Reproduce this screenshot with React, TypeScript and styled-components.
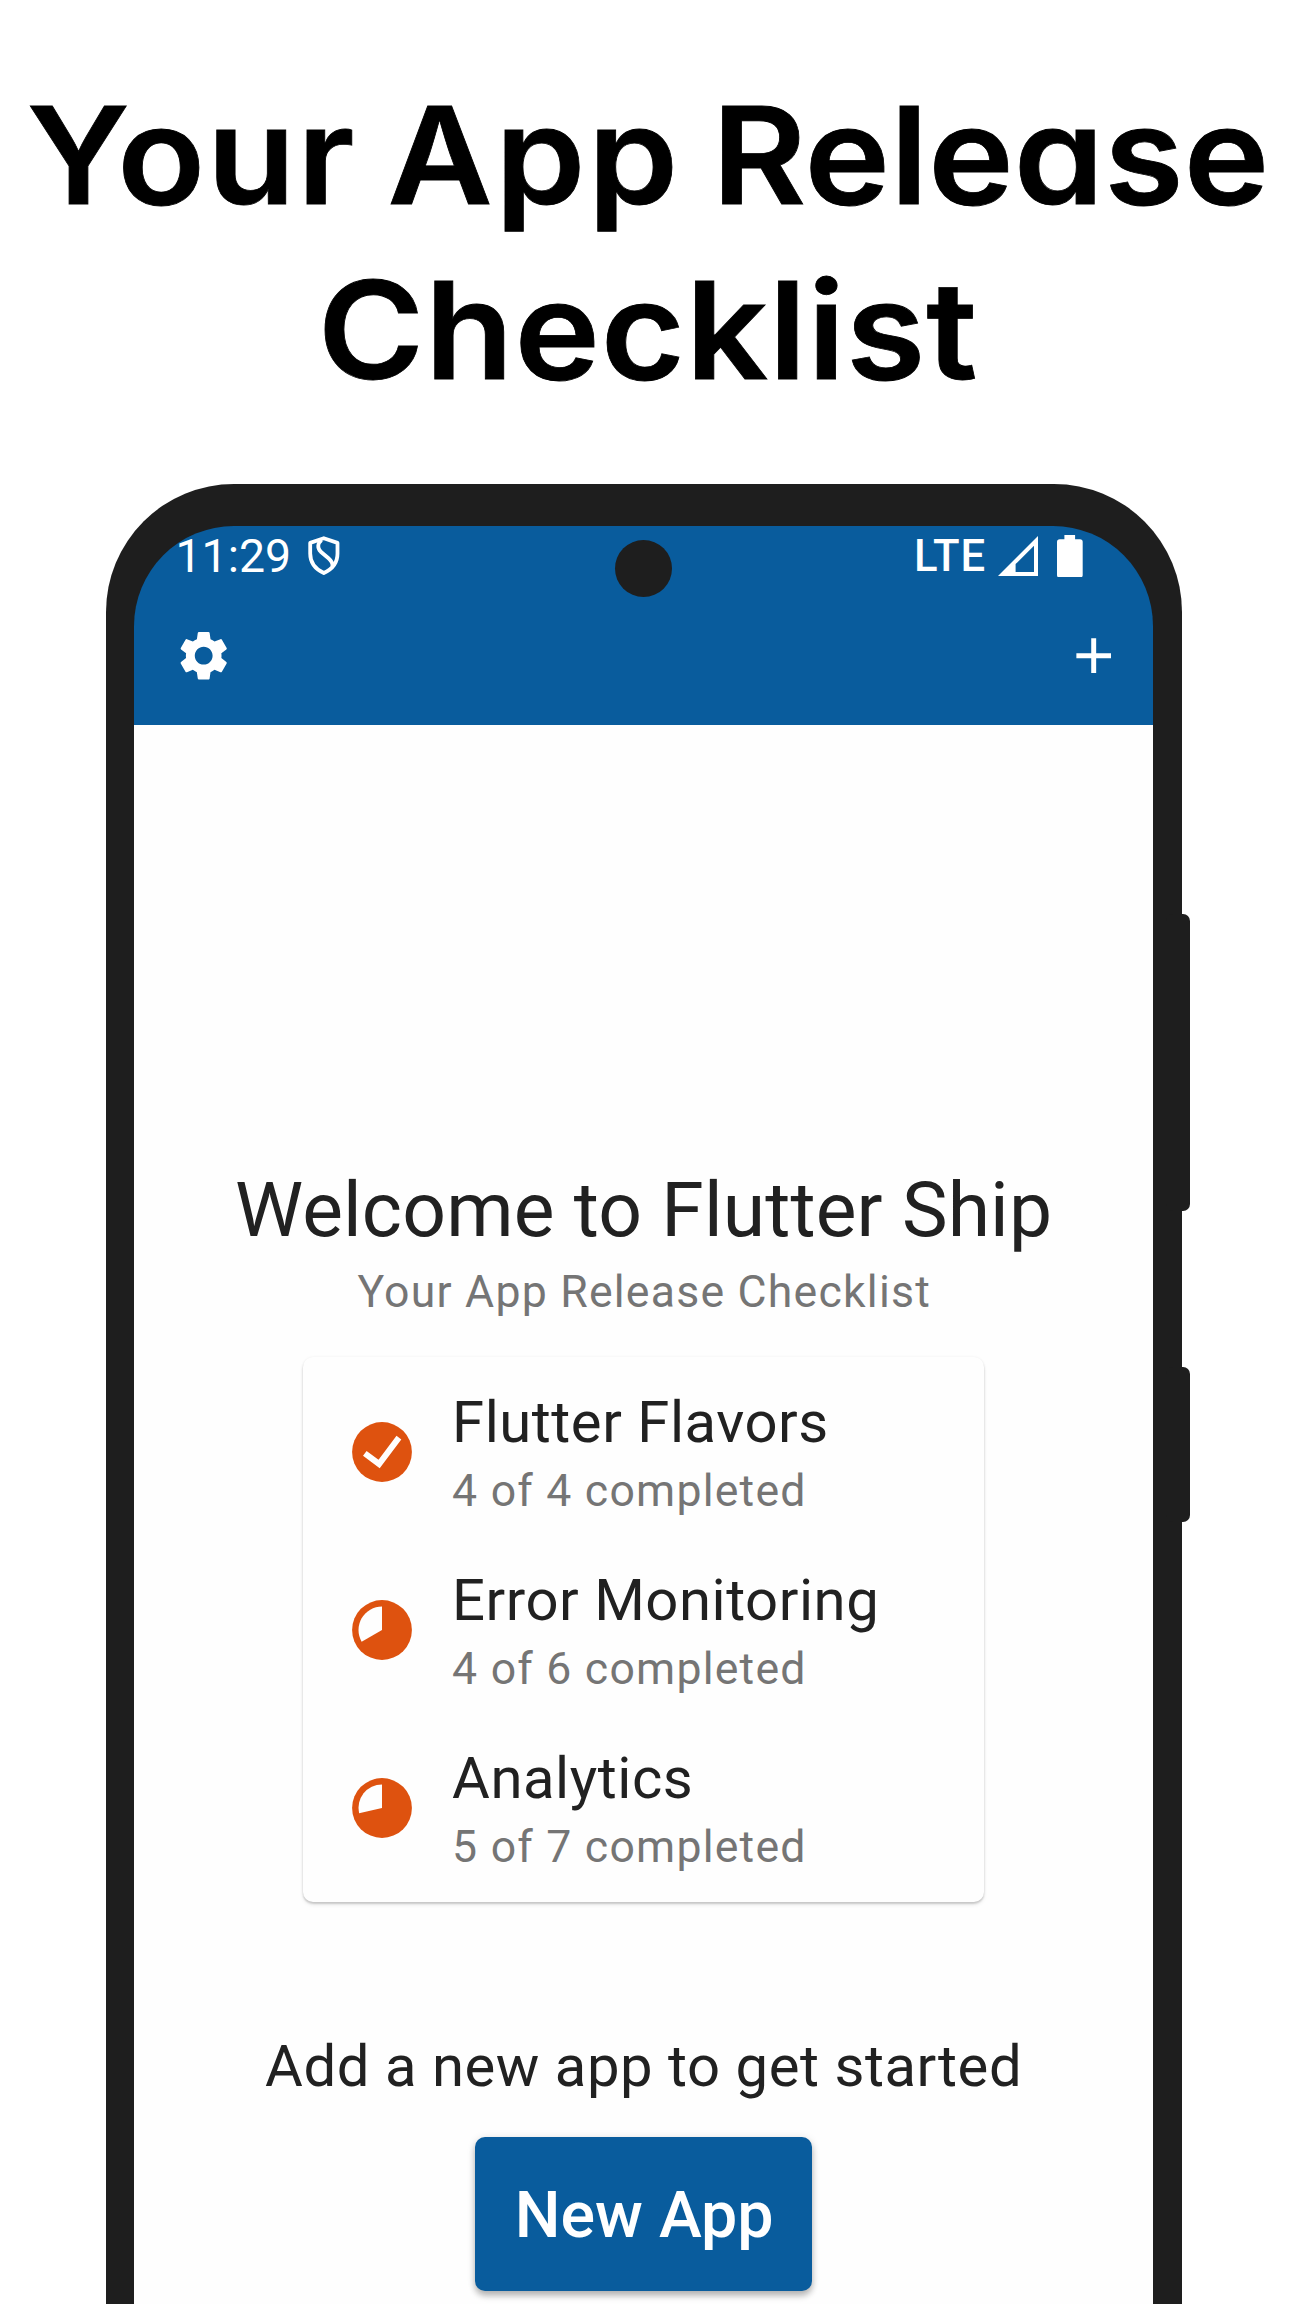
import React from 'react';
import styled, { createGlobalStyle } from 'styled-components';
import { MdAdd, MdSettings } from 'react-icons/md';

const BLUE = '#095c9d';
const FRAME = '#1e1e1e';
const ORANGE = '#de520f';

const GlobalStyle = createGlobalStyle`
  body { margin: 0; background: #fff; }
  *, *::before, *::after { box-sizing: border-box; }
`;

const Poster = styled.main`
  width: 1296px;
  height: 2304px;
  overflow: hidden;
  background: #fff;
  font-family: Roboto, sans-serif;
`;

const Headline = styled.h1`
  height: 484px;
  margin: 0;
  padding-top: 68.4px;
  color: #000;
  font: 600 135px/175px Inter, sans-serif;
  font-feature-settings: 'cv11';
  -webkit-text-stroke: 0.8px #000;
  transform: scaleX(1.07);
`;

const HeadlineRow = styled.span`
  display: flex;
  justify-content: center;
  gap: 29px;
`;

const Word = styled.span<{ $tracking: number }>`
  letter-spacing: ${(p) => p.$tracking}px;
  white-space: nowrap;
`;

const Phone = styled.section`
  position: relative;
  width: 1075.6px;
  height: 1960px;
  margin-left: 106px;
  padding: 42.4px 28.3px 0 28px;
  border-radius: 128px;
  background: ${FRAME};
`;

const SideKey = styled.span<{ $top: number; $height: number }>`
  position: absolute;
  top: ${(p) => p.$top}px;
  right: -8.4px;
  width: 24px;
  height: ${(p) => p.$height}px;
  border-radius: 7px;
  background: ${FRAME};
`;

const Camera = styled.span`
  position: absolute;
  top: 56.4px;
  left: 509.2px;
  width: 57px;
  height: 57px;
  border-radius: 50%;
  background: ${FRAME};
`;

const Screen = styled.div`
  height: 100%;
  overflow: hidden;
  border-radius: 100px;
  background: ${BLUE};
`;

const Header = styled.header`
  height: 198.2px;
  color: #fff;
`;

const StatusBar = styled.div`
  display: flex;
  justify-content: space-between;
  height: 59.4px;
  padding: 0 70.6px 0 41.5px;
`;

const StatusGroup = styled.div<{ $gap: number }>`
  display: flex;
  align-items: center;
  gap: ${(p) => p.$gap}px;
`;

const Clock = styled.span`
  padding-top: 2px;
  font-size: 46.4px;
  line-height: 59.4px;
`;

const Network = styled.span`
  margin-right: -7px;
  padding-top: 2px;
  font-size: 43.6px;
  font-weight: 500;
  line-height: 59.4px;
  letter-spacing: 0.9px;
`;

const AppBar = styled.nav`
  display: flex;
  align-items: center;
  justify-content: space-between;
  height: 138.8px;
  padding: 0.8px 29.8px 0 40px;
`;

const IconButton = styled.button`
  display: flex;
  padding: 0;
  border: 0;
  background: none;
  color: inherit;
`;

const Content = styled.div`
  display: flex;
  flex-direction: column;
  align-items: center;
  height: 100%;
  padding-top: 440.8px;
  background: #fefefe;
`;

const Welcome = styled.h2`
  margin: 0;
  color: #212121;
  font-size: 76.8px;
  font-weight: 400;
  line-height: 90px;
  letter-spacing: 0.14px;
  white-space: nowrap;
`;

const Secondary = styled.p`
  margin: 0;
  color: #757575;
  font-size: 44.6px;
  line-height: 52px;
  letter-spacing: 1.22px;
  white-space: nowrap;
`;

const Tagline = styled(Secondary)`
  margin-top: 10.9px;
  padding-left: 1.2px;
`;

const Card = styled.ul`
  width: 681.3px;
  margin: 39.2px 0 0;
  padding: 5px 0;
  border-radius: 10px;
  background: #fefefe;
  box-shadow: 0 2px 2px rgba(0, 0, 0, 0.15), 0 3px 4px rgba(0, 0, 0, 0.07), 0 0 3px rgba(0, 0, 0, 0.06);
  list-style: none;
`;

const Item = styled.li`
  display: flex;
  align-items: center;
  gap: 39.7px;
  height: 178.3px;
  padding-left: 49.4px;
`;

const ItemText = styled.div`
  display: flex;
  flex-direction: column;
  gap: 9px;
  padding-top: 1.2px;
`;

const Primary = styled.p`
  margin: 0;
  color: #212121;
  font-size: 58px;
  line-height: 68px;
  letter-spacing: 0.54px;
  white-space: nowrap;
`;

const Prompt = styled(Primary)`
  margin-top: 129.6px;
`;

const NewAppButton = styled.button`
  width: 337.2px;
  height: 153.7px;
  margin-top: 37.4px;
  padding: 2px 0 0 1px;
  border: 0;
  border-radius: 10px;
  background: ${BLUE};
  box-shadow: 0 5px 6px rgba(0, 0, 0, 0.24), 0 1px 8px rgba(0, 0, 0, 0.12);
  color: #fff;
  font: 500 64.5px/76px Roboto, sans-serif;
`;

const tasks = [
  { name: 'Flutter Flavors', done: 4, total: 4 },
  { name: 'Error Monitoring', done: 4, total: 6 },
  { name: 'Analytics', done: 5, total: 7 },
];

function Progress({ done, total }: { done: number; total: number }) {
  const angle = (done / total) * Math.PI * 2;
  const x = 23.5 * Math.sin(angle);
  const y = -23.5 * Math.cos(angle);
  return (
    <svg width="60" height="60" viewBox="-30 -30 60 60">
      <circle r="29.9" fill={ORANGE} />
      {done === total ? (
        <path d="M-17.2 1.3 L-2.9 12 L16.9 -14.4" fill="none" stroke="#fefefe" strokeWidth="6" />
      ) : (
        <path d={`M0 0 L${x} ${y} A23.5 23.5 0 0 1 0 -23.5 Z`} fill="#fefefe" />
      )}
    </svg>
  );
}

function ShieldIcon() {
  return (
    <svg width="32" height="40" viewBox="0 0 32 40" fill="none" stroke="#fff" strokeWidth="3.8">
      <path d="M15.8 2.2 L29.5 6.9 V17.5 C29.5 27 24 33.3 15.8 37 C7.6 33.3 2.2 27 2.2 17.5 V6.9 Z" strokeLinejoin="round" />
      <path d="M13.5 4 C9.4 7.5 9.2 12 12.8 15.8 L20.5 22.3 C23.6 25 25 27 24.4 30.5" />
    </svg>
  );
}

function SignalIcon() {
  return (
    <svg width="40" height="40" viewBox="0 0 40 40">
      <path fill="#fff" fillRule="evenodd" d="M40 0 V40 H0 Z M36 9.7 L17.6 28.1 V36 H36 Z" />
    </svg>
  );
}

function BatteryIcon() {
  return (
    <svg width="25.7" height="42.7" viewBox="0 0 25.7 42.7" fill="#fff">
      <rect x="7.4" width="10.7" height="8" />
      <rect y="4.3" width="25.7" height="38.4" rx="2.8" />
    </svg>
  );
}

export default function App() {
  return (
    <Poster>
      <GlobalStyle />
      <Headline>
        <HeadlineRow>
          <Word $tracking={1.7}>Your</Word>
          <Word $tracking={2.5}>App</Word>
          <Word $tracking={0.2}>Release</Word>
        </HeadlineRow>
        <HeadlineRow>
          <Word $tracking={0.8}>Checklist</Word>
        </HeadlineRow>
      </Headline>
      <Phone>
        <SideKey $top={430} $height={297} />
        <SideKey $top={883} $height={155} />
        <Screen>
          <Header>
            <StatusBar>
              <StatusGroup $gap={16.5}>
                <Clock>11:29</Clock>
                <ShieldIcon />
              </StatusGroup>
              <StatusGroup $gap={19}>
                <Network>LTE</Network>
                <SignalIcon />
                <BatteryIcon />
              </StatusGroup>
            </StatusBar>
            <AppBar>
              <IconButton aria-label="Settings">
                <MdSettings size={59.4} />
              </IconButton>
              <IconButton aria-label="Add">
                <MdAdd size={59.4} />
              </IconButton>
            </AppBar>
          </Header>
          <Content>
            <Welcome>Welcome to Flutter Ship</Welcome>
            <Tagline>Your App Release Checklist</Tagline>
            <Card>
              {tasks.map((t) => (
                <Item key={t.name}>
                  <Progress done={t.done} total={t.total} />
                  <ItemText>
                    <Primary>{t.name}</Primary>
                    <Secondary>{`${t.done} of ${t.total} completed`}</Secondary>
                  </ItemText>
                </Item>
              ))}
            </Card>
            <Prompt>Add a new app to get started</Prompt>
            <NewAppButton>New App</NewAppButton>
          </Content>
        </Screen>
        <Camera />
      </Phone>
    </Poster>
  );
}
